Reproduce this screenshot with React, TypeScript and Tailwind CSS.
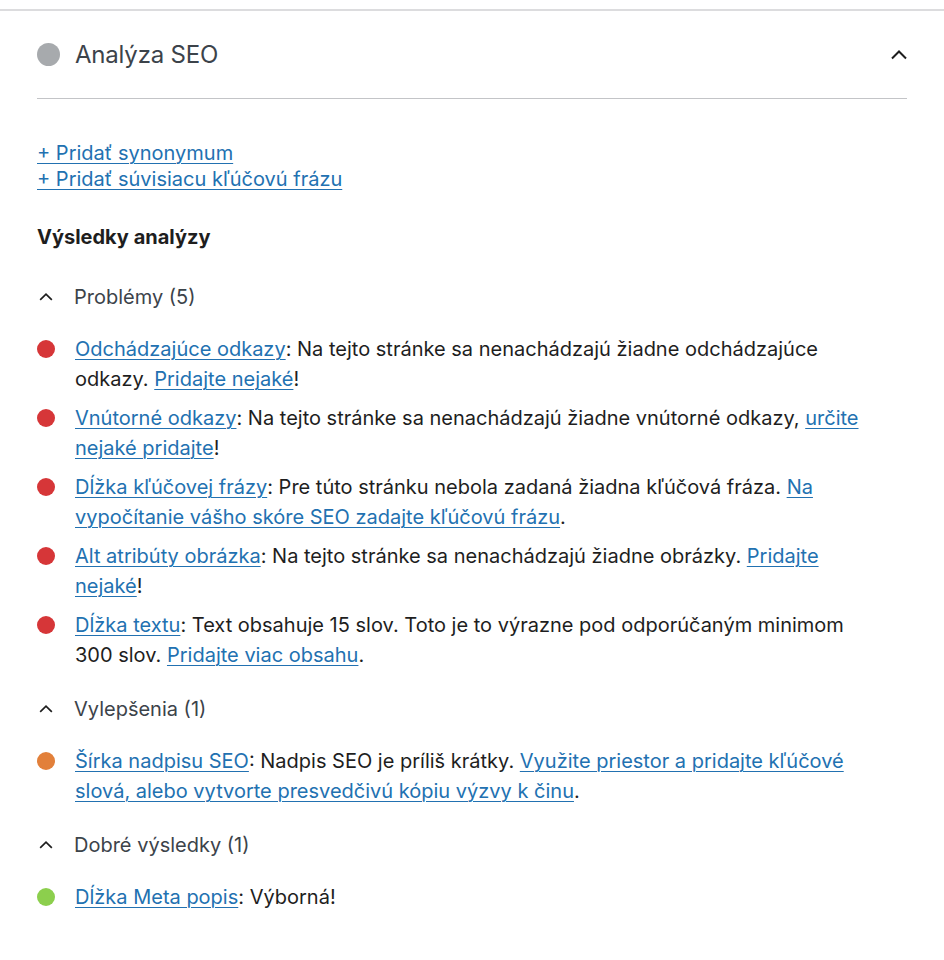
import React from "react";

type Part = string | { link: string };

type Result = {
  color: string;
  parts: Part[];
};

const problems: Result[] = [
  {
    color: "bg-[#d63638]",
    parts: [
      { link: "Odchádzajúce odkazy" },
      ": Na tejto stránke sa nenachádzajú žiadne odchádzajúce odkazy. ",
      { link: "Pridajte nejaké" },
      "!",
    ],
  },
  {
    color: "bg-[#d63638]",
    parts: [
      { link: "Vnútorné odkazy" },
      ": Na tejto stránke sa nenachádzajú žiadne vnútorné odkazy, ",
      { link: "určite nejaké pridajte" },
      "!",
    ],
  },
  {
    color: "bg-[#d63638]",
    parts: [
      { link: "Dĺžka kľúčovej frázy" },
      ": Pre túto stránku nebola zadaná žiadna kľúčová fráza. ",
      { link: "Na vypočítanie vášho skóre SEO zadajte kľúčovú frázu" },
      ".",
    ],
  },
  {
    color: "bg-[#d63638]",
    parts: [
      { link: "Alt atribúty obrázka" },
      ": Na tejto stránke sa nenachádzajú žiadne obrázky. ",
      { link: "Pridajte nejaké" },
      "!",
    ],
  },
  {
    color: "bg-[#d63638]",
    parts: [
      { link: "Dĺžka textu" },
      ": Text obsahuje 15 slov. Toto je to výrazne pod odporúčaným minimom 300 slov. ",
      { link: "Pridajte viac obsahu" },
      ".",
    ],
  },
];

const improvements: Result[] = [
  {
    color: "bg-[#e2803a]",
    parts: [
      { link: "Šírka nadpisu SEO" },
      ": Nadpis SEO je príliš krátky. ",
      { link: "Využite priestor a pridajte kľúčové slová, alebo vytvorte presvedčivú kópiu výzvy k činu" },
      ".",
    ],
  },
];

const good: Result[] = [
  {
    color: "bg-[#8ccf4d]",
    parts: [{ link: "Dĺžka Meta popis" }, ": Výborná!"],
  },
];

function Chevron({ className }: { className?: string }) {
  return (
    <svg viewBox="0 0 24 24" className={className} fill="none" stroke="currentColor" strokeWidth={2}>
      <path d="M5 15.5l7-7 7 7" />
    </svg>
  );
}

function Group({ title, items }: { title: string; items: Result[] }) {
  return (
    <div className="flex flex-col">
      <div className="flex items-center h-[30px] text-[#3c434a]">
        <Chevron className="w-[20px] h-[20px] ml-[-1px] text-[#1e1e1e]" />
        <span className="ml-[18px]">{title}</span>
      </div>
      <ul className="flex flex-col gap-[9px] mt-[22px] mb-[24px]">
        {items.map((r, i) => (
          <li key={i} className="flex leading-[30px]">
            <span className={`shrink-0 mt-[6px] w-[18px] h-[18px] rounded-full ${r.color}`} />
            <p className="ml-[20px] w-[805px] text-[#1e1e1e]">
              {r.parts.map((p, j) =>
                typeof p === "string" ? (
                  <span key={j}>{p}</span>
                ) : (
                  <a key={j} href="#" className="text-[#2271b1] underline underline-offset-[3px] decoration-1">
                    {p.link}
                  </a>
                )
              )}
            </p>
          </li>
        ))}
      </ul>
    </div>
  );
}

export default function App() {
  return (
    <div className="bg-white min-h-[960px] w-[944px] font-['Inter','Noto_Sans',sans-serif] text-[20px]">
      <div className="h-[9px]" />
      <div className="border-t-2 border-[#dcdcde]" />
      <div className="px-[37px]">
        <div className="flex items-center h-[88px] border-b border-[#c3c4c7] text-[#3c434a]">
          <span className="w-[23px] h-[23px] rounded-full bg-[#a7aaad]" />
          <span className="ml-[15px] text-[24px] tracking-[-0.2px]">Analýza SEO</span>
          <Chevron className="ml-auto mr-[-4px] w-[24px] h-[24px] text-[#1e1e1e]" />
        </div>
        <div className="flex flex-col mt-[41px] leading-[26px]">
          <a href="#" className="text-[#2271b1] underline underline-offset-[3px] decoration-1 w-fit">
            + Pridať synonymum
          </a>
          <a href="#" className="text-[#2271b1] underline underline-offset-[3px] decoration-1 w-fit">
            + Pridať súvisiacu kľúčovú frázu
          </a>
        </div>
        <h3 className="mt-[30px] font-bold text-[#1e1e1e] leading-[30px]">Výsledky analýzy</h3>
        <div className="mt-[30px]">
          <Group title="Problémy (5)" items={problems} />
          <Group title="Vylepšenia (1)" items={improvements} />
          <Group title="Dobré výsledky (1)" items={good} />
        </div>
      </div>
    </div>
  );
}
